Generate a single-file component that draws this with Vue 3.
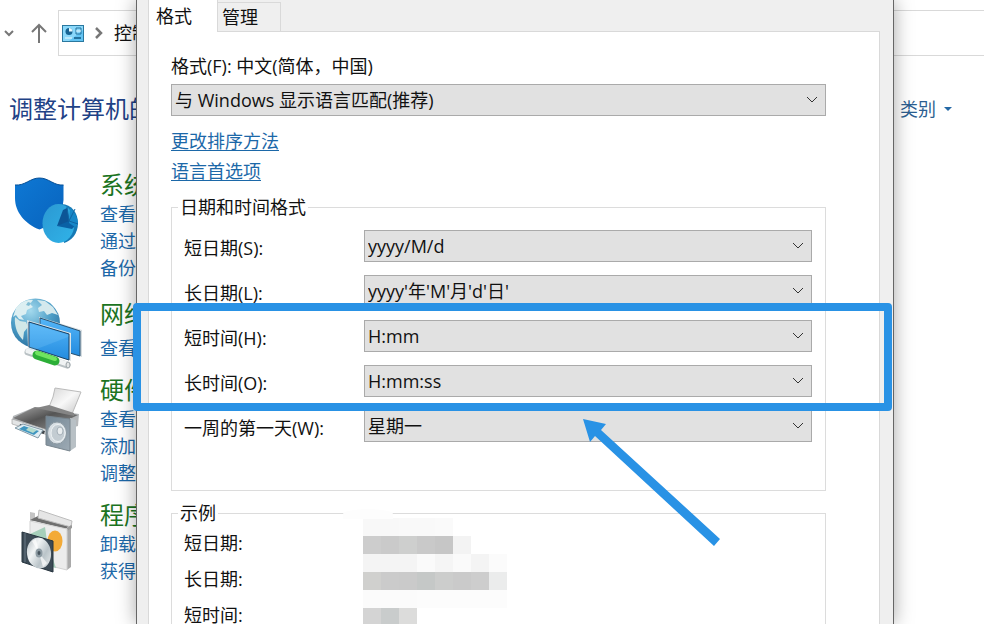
<script setup>
import { ref } from 'vue'

const formatLang = ref('与 Windows 显示语言匹配(推荐)')

const fields = ref([
  { id: 'short-date', label: '短日期(S):', value: 'yyyy/M/d' },
  { id: 'long-date', label: '长日期(L):', value: "yyyy'年'M'月'd'日'" },
  { id: 'short-time', label: '短时间(H):', value: 'H:mm' },
  { id: 'long-time', label: '长时间(O):', value: 'H:mm:ss' },
  { id: 'first-day', label: '一周的第一天(W):', value: '星期一' }
])

const samples = ['短日期:', '长日期:', '短时间:']

// hidden sample values, one row of blocks per 18px
const mosaic = [
  ['#f8f8f8', '#f8f8f8', '#f9f9f9', '#f9f9f9', '#fafafa'],
  ['#cdcdcd', '#cacaca', '#cecfce', '#c9c9c9', '#c6c6c6', '#f3f3f3'],
  ['#f4f4f4', '#f4f4f4', '#f4f4f4', '#fafafa', '#f5f5f5', '#fafafa', '#f4f4f4', '#fbfbfb'],
  ['#d0d0ce', '#cbcbcb', '#cacaca', '#c5c8c7', '#cccdcc', '#cacaca', '#cdcdcd', '#ebecec'],
  ['#fbfbfb', '#fbfbfb', '#fbfbfb', '#fcfcfc', '#fcfcfc', '#fcfcfc', '#fcfcfc', '#fcfcfc'],
  ['#d4d4d4', '#c9cccc', '#dcdcdb']
]
</script>

<template>
  <div class="desktop">
    <main class="panel">
      <nav class="address-row">
        <button class="nav-btn recent" aria-label="▾">
          <svg width="10" height="8" viewBox="0 0 10 8"><path d="M1 2l4 4 4-4" fill="none" stroke="#777" stroke-width="2" /></svg>
        </button>
        <button class="nav-btn up" aria-label="↑">
          <svg width="18" height="20" viewBox="0 0 18 20"><path d="M9 20V2M2 9l7-7 7 7" fill="none" stroke="#777" stroke-width="2" /></svg>
        </button>
        <div class="address">
          <svg width="22" height="17" viewBox="0 0 22 17">
            <rect x=".5" y=".5" width="21" height="16" fill="#62c3f2" stroke="#2a789f" />
            <path d="M1 1h20v4L7 16H1z" fill="#8ad8fa" />
            <circle cx="7" cy="6.500" r="3.500" fill="#176493" />
            <path d="M7 6.500V3a3.500 3.500 0 0 1 3.500 3.500z" fill="#e8faff" />
            <path d="M14 3h5v6h-5z" fill="none" stroke="#24739e" />
            <path d="M14 6h5" stroke="#eafaff" />
            <path d="M3 13h7" stroke="#eafaff" />
            <path d="M12 13h7" stroke="#24739e" stroke-width="2" />
          </svg>
          <svg width="8" height="12" viewBox="0 0 8 12"><path d="M1 1l5 5-5 5" fill="none" stroke="#777" stroke-width="2.500" /></svg>
          <span>控制</span>
        </div>
      </nav>

      <header class="heading-row">
        <h1>调整计算机的</h1>
        <button class="view-by">类别 <i class="caret"></i></button>
      </header>

      <div class="categories">
        <section class="category">
          <svg class="category-icon" viewBox="8 171 76 64">
            <defs>
              <linearGradient id="shield" x1="0" y1="0" x2="1" y2="1">
                <stop offset="0" stop-color="#0e78d4" /><stop offset="1" stop-color="#0863bd" />
              </linearGradient>
              <linearGradient id="pie" x1="0" y1="0" x2="1" y2="1">
                <stop offset="0" stop-color="#2b98d2" /><stop offset="1" stop-color="#30b3e8" />
              </linearGradient>
            </defs>
            <path d="M15 185C25 186 30 178 39.500 178S54 186 63.500 185v15c-1 14-9 24-24 29.500C25 224 15 212 15 198z" fill="url(#shield)" />
            <path d="M15 185C25 186 30 178 39.500 178S54 186 63.500 185" fill="none" stroke="#075096" />
            <path d="M60 204c11-1 18 9 18 19 0 11-7 18-14 20z" fill="#1679b4" />
            <ellipse cx="58.500" cy="223.500" rx="16" ry="19.500" fill="url(#pie)" />
            <path d="M57 226l6-16 4-2 3 16z" fill="#0c5596" />
            <path d="M57 226l12-5 6 5-3 3z" fill="#0a61a5" />
            <path d="M69 223l1-15c5 4 7 9 8 16l-3 3z" fill="#1687c8" />
            <path d="M67 207l2 14 9 3M69 221l6-12" fill="none" stroke="#0f64a2" />
          </svg>
          <div>
            <h2><a href="#">系统</a></h2>
            <a href="#">查看</a>
            <a href="#">通过</a>
            <a href="#">备份</a>
          </div>
        </section>

        <section class="category network">
          <svg class="category-icon" viewBox="8 300 76 60">
            <defs>
              <radialGradient id="globe" cx=".4" cy=".25" r=".8">
                <stop offset="0" stop-color="#a3d9ed" /><stop offset=".55" stop-color="#4c9dc6" /><stop offset="1" stop-color="#286e9e" />
              </radialGradient>
              <linearGradient id="screen" x1="0" y1="0" x2="0" y2="1">
                <stop offset="0" stop-color="#55b6f8" /><stop offset="1" stop-color="#238bdf" />
              </linearGradient>
            </defs>
            <circle cx="35.500" cy="323" r="24.500" fill="url(#globe)" />
            <path d="M16 308c4-5 10-9 17-8l-3 4 3 3-6 3-1 4-5 2 3 4-5-1-3-4-3 2z" fill="#dceff2" />
            <path d="M15 317l5 4 6 1 2 5-4 5-1 8c-5-5-9-13-8-23z" fill="#d2e8e8" />
            <path d="M37 300l8 1 8 6 5 8-6-2-5 2-3-4-5 1-1-4 4-3z" fill="#d4e9ed" />
            <path d="M28 302l3 1-2 3-3-1z" fill="#82bdd4" />
            <path d="M39 317l43 13v27l-43-12z" fill="#d6dde1" />
            <path d="M40 318l40 13v25l-40-12z" fill="url(#screen)" stroke="#285272" />
            <path d="M27 320l44 13v28l-43-13z" fill="#dce4e7" />
            <path d="M29 322l40 12v26l-40-13z" fill="url(#screen)" stroke="#173f62" />
            <path d="M29 323l40 12-1 2-39 15z" fill="#93d8ff" opacity=".2" />
            <path d="M28 352l39 13" stroke="#b9c1c4" stroke-width="7" stroke-linecap="round" />
            <path d="M28 351l39 13" stroke="#f0f3f4" stroke-width="5" stroke-linecap="round" />
            <path d="M37 355l18 6" stroke="#2cae37" stroke-width="9" stroke-linecap="round" />
            <path d="M37 353l18 6" stroke="#70e45f" stroke-width="4" stroke-linecap="round" />
            <ellipse cx="68" cy="365" rx="2" ry="3" fill="#e4e7e8" stroke="#9ca5a9" />
          </svg>
          <div>
            <h2><a href="#">网络</a></h2>
            <a href="#">查看</a>
          </div>
        </section>

        <section class="category">
          <svg class="category-icon" viewBox="8 376 76 64">
            <defs>
              <linearGradient id="paper" x1="0" y1="0" x2="1" y2="1">
                <stop offset="0" stop-color="#d5d5d5" /><stop offset=".5" stop-color="#f8f8f8" /><stop offset="1" stop-color="#c5c5c5" />
              </linearGradient>
              <linearGradient id="printer" x1="0" y1="0" x2="1" y2="1">
                <stop offset="0" stop-color="#a7a7a7" /><stop offset=".45" stop-color="#555" /><stop offset="1" stop-color="#929292" />
              </linearGradient>
              <linearGradient id="speaker" x1="0" y1="0" x2="1" y2="1">
                <stop offset="0" stop-color="#728593" /><stop offset="1" stop-color="#9eabb5" />
              </linearGradient>
            </defs>
            <path d="M55 388l26 4-9 22-23-7 4-10z" fill="url(#paper)" stroke="#bbb" />
            <path d="M35 407l44 7-1 12-30 9-36-12 1-7z" fill="#b5b8ba" />
            <path d="M35 407l43 8-25 12-6 3-34-12z" fill="url(#printer)" />
            <path d="M36 408l13-3 25 8v3z" fill="#858585" />
            <path d="M12 419l36 11v5l-36-11z" fill="#e3e5e6" stroke="#999" stroke-width=".6" />
            <path d="M20 424l25 7-1 3-25-6z" fill="#42484d" />
            <path d="M15 428l8-4 20 6-5 8z" fill="#e0edf3" stroke="#8299a6" />
            <path d="M19 429l5-3 15 5-5 4z" fill="#3f95bf" />
            <path d="M26 430l3-3 8 3-4 3z" fill="#b5dbce" />
            <path d="M70 418l6 2v27l-6 4z" fill="#b8c0c5" />
            <path d="M46 416l24 3v32l-24-6z" fill="url(#speaker)" stroke="#78858e" />
            <ellipse cx="57" cy="433" rx="9.500" ry="11" fill="#d7dee3" stroke="#8c99a2" />
            <ellipse cx="58" cy="433" rx="7" ry="8.500" fill="#c3ccd2" stroke="#eef2f4" />
            <ellipse cx="60" cy="431" rx="3" ry="4" fill="#e9edef" stroke="#a5b0b8" />
          </svg>
          <div>
            <h2><a href="#">硬件</a></h2>
            <a href="#">查看</a>
            <a href="#">添加</a>
            <a href="#">调整</a>
          </div>
        </section>

        <section class="category">
          <svg class="category-icon" viewBox="8 501 76 64">
            <defs>
              <linearGradient id="disc" x1="0" y1="0" x2="1" y2="1">
                <stop offset="0" stop-color="#aeb8bd" /><stop offset=".35" stop-color="#f1f4f5" /><stop offset=".65" stop-color="#bac4c9" /><stop offset="1" stop-color="#eceff0" />
              </linearGradient>
            </defs>
            <path d="M30 512l5 1v7l-5 2z" fill="#c4c4c4" />
            <path d="M30 520l8-4 32 9-4 4z" fill="#6e6e6e" />
            <path d="M39 510l33 11-1 6-33-9z" fill="#e6e6e6" stroke="#bdbdbd" />
            <path d="M67 528l4-3v42l-4 3z" fill="#aaa" />
            <path d="M67 528l5-3v3l-5 3z" fill="#999" />
            <path d="M30 521l37 8v41l-37-9z" fill="#ececec" stroke="#d3d3d3" />
            <path d="M30 534l15-7 2 14 9 27-26-7z" fill="#a6cfba" />
            <ellipse cx="55" cy="541" rx="7.500" ry="10.500" fill="#f3aa37" />
            <path d="M22 532l31 9v31l-31-10z" fill="#3c4a55" stroke="#26343e" />
            <path d="M25 533v29" stroke="#687986" />
            <ellipse cx="39" cy="553" rx="12" ry="15.500" fill="url(#disc)" transform="rotate(-8 39 553)" />
            <path d="M39 553l-7-12 4-2zM39 553l8 10-4 4z" fill="#fff" opacity=".7" />
            <ellipse cx="39" cy="553" rx="3.500" ry="4.500" fill="#8d9ba3" />
            <ellipse cx="39" cy="553" rx="1.500" ry="2" fill="#46545e" />
          </svg>
          <div>
            <h2><a href="#">程序</a></h2>
            <a href="#">卸载</a>
            <a href="#">获得</a>
          </div>
        </section>
      </div>
    </main>

    <div class="dialog" role="dialog">
      <div class="tabs" role="tablist">
        <button class="tab active" role="tab" aria-selected="true">格式</button>
        <button class="tab" role="tab" aria-selected="false">管理</button>
      </div>

      <form class="tab-page" @submit.prevent>
        <label class="format-label" for="format-lang">格式(F): 中文(简体，中国)</label>
        <div class="select-box">
          <select id="format-lang" v-model="formatLang">
            <option>与 Windows 显示语言匹配(推荐)</option>
          </select>
          <svg class="chevron" viewBox="0 0 12 8"><path d="M1 1l5 5 5-5" /></svg>
        </div>

        <div class="links">
          <a href="#">更改排序方法</a>
          <a href="#">语言首选项</a>
        </div>

        <fieldset class="formats">
          <legend>日期和时间格式</legend>
          <div v-for="field in fields" :key="field.id" class="field">
            <label :for="field.id">{{ field.label }}</label>
            <div class="select-box">
              <select :id="field.id" v-model="field.value">
                <option>{{ field.value }}</option>
              </select>
              <svg class="chevron" viewBox="0 0 12 8"><path d="M1 1l5 5 5-5" /></svg>
            </div>
          </div>
        </fieldset>

        <fieldset class="samples">
          <legend>示例</legend>
          <div class="sample-body">
            <div class="sample-labels">
              <span v-for="label in samples" :key="label">{{ label }}</span>
            </div>
            <div class="mosaic">
              <div v-for="(row, y) in mosaic" :key="y" class="mosaic-row">
                <i v-for="(color, x) in row" :key="x" :style="{ background: color }"></i>
              </div>
            </div>
          </div>
          <i class="smudge"></i>
        </fieldset>
      </form>

      <div class="highlight"></div>
      <svg class="pointer" width="138" height="128" viewBox="0 0 138 128">
        <path d="M0 0L23 5 18 11 137 120 131 127 12 17 7 23z" fill="#2992e5" />
      </svg>
    </div>
  </div>
</template>

<style>
body {
  margin: 0;
  background: #fff;
}
</style>

<style scoped>
.desktop {
  position: relative;
  height: 100vh;
  overflow: hidden;
  font-family: "Open Sans", "Noto Sans CJK SC", sans-serif;
  font-size: 18px;
  line-height: 24px;
  color: #111;
}

button,
select {
  font: inherit;
  color: inherit;
}

button {
  border: none;
  padding: 0;
  background: none;
  cursor: pointer;
}

a {
  color: #1c68a8;
  text-decoration: none;
}

/* control panel behind the dialog */
.address-row {
  display: flex;
  align-items: center;
  padding-top: 10px;
}

.nav-btn {
  display: flex;
}

.recent {
  margin-left: 4px;
}

.up {
  margin: 0 10px 0 16px;
}

.address {
  flex: 1;
  display: flex;
  align-items: center;
  height: 44px;
  padding-left: 3px;
  border: 1px solid #d9d9d9;
  border-right: none;
}

.address svg + svg {
  margin: 0 11px 0 11px;
}

.heading-row {
  display: flex;
  align-items: center;
  justify-content: space-between;
  padding: 37px 32px 0 9px;
}

h1 {
  margin: 0;
  font-size: 24px;
  line-height: 32px;
  font-weight: 400;
  color: #1f4286;
}

.view-by {
  display: flex;
  align-items: center;
  gap: 8px;
  color: #2c5f91;
}

.caret {
  border: 4px solid transparent;
  border-top-color: #2468a5;
  border-bottom: none;
}

.categories {
  display: flex;
  flex-direction: column;
  gap: 14px;
  padding: 46px 0 0 8px;
}

.category {
  display: flex;
  gap: 16px;
}

.category-icon {
  flex: none;
  width: 76px;
  height: 64px;
  overflow: visible;
}

.category a {
  display: block;
  line-height: 27px;
}

.category h2 {
  margin: 0 0 2px;
  font-size: 24px;
  font-weight: 400;
}

.category h2 a {
  line-height: 28px;
  color: #1c741f;
}

.network {
  padding-top: 4px;
}

.network .category-icon {
  height: 60px;
}

.network h2 {
  margin-bottom: 7px;
}

/* dialog */
.dialog {
  position: absolute;
  top: 0;
  bottom: 0;
  left: 136px;
  right: 90px;
  display: flex;
  flex-direction: column;
  padding: 0 13px 0 11px;
  border: solid #666;
  border-width: 0 1px;
  background: #efefef;
  box-shadow: 0 0 18px rgba(0, 0, 0, 0.35);
}

.tabs {
  display: flex;
  align-items: flex-end;
  height: 31px;
}

.tab {
  box-sizing: border-box;
  width: 63px;
  height: 29px;
  padding-right: 18px;
  border: 1px solid #d9d9d9;
  border-left: none;
  border-bottom: none;
}

.tab.active {
  position: relative;
  width: 70px;
  height: 32px;
  margin-bottom: -1px;
  border-top: none;
  border-left: 1px solid #d9d9d9;
  background: #fff;
}

.tab-page {
  flex: 1;
  padding: 22px 53px 0 22px;
  border: 1px solid #d9d9d9;
  border-bottom: none;
  background: #fff;
}

.format-label {
  display: block;
  margin-bottom: 6px;
}

.select-box {
  position: relative;
  flex: 1;
}

.select-box select {
  display: block;
  appearance: none;
  box-sizing: border-box;
  width: 100%;
  height: 32px;
  padding: 0 32px 0 3px;
  border: 1px solid #aaa;
  border-radius: 0;
  background: #e1e1e1;
}

.chevron {
  position: absolute;
  top: 12px;
  right: 8px;
  width: 12px;
  height: 8px;
  fill: none;
  stroke: #333;
  pointer-events: none;
}

.links {
  display: flex;
  flex-direction: column;
  align-items: flex-start;
  gap: 6px;
  margin: 13px 0 12px;
}

.links a {
  text-decoration: underline;
  text-underline-offset: 2px;
}

fieldset {
  position: relative;
  min-width: 0;
  margin: 0;
  padding: 0 13px 0 12px;
  border: 1px solid #dcdcdc;
}

legend {
  margin-left: -6px;
  padding: 0 2px;
}

.formats {
  padding-bottom: 48px;
}

.field {
  display: flex;
  margin-top: 13px;
}

.field:first-of-type {
  margin-top: 11px;
}

.field label {
  width: 180px;
  padding-top: 6px;
}

.samples {
  margin-top: 10px;
  height: 200px;
}

.sample-body {
  display: flex;
  margin-top: -7px;
}

.sample-labels {
  display: flex;
  flex-direction: column;
  gap: 12px;
  width: 179px;
  padding-top: 13px;
}

.mosaic-row {
  display: flex;
  height: 18px;
}

.mosaic-row i {
  width: 18px;
}

.smudge {
  position: absolute;
  top: -16px;
  left: 171px;
  width: 50px;
  height: 10px;
  border-radius: 50% 50% 0 0;
  background: #fdfdfd;
}

/* annotation over the time rows */
.highlight {
  position: absolute;
  top: 303px;
  left: -4px;
  right: 1px;
  height: 92px;
  border: 8px solid #2992e5;
  border-radius: 4px;
  pointer-events: none;
}

.pointer {
  position: absolute;
  top: 419px;
  left: 446px;
  pointer-events: none;
}
</style>
